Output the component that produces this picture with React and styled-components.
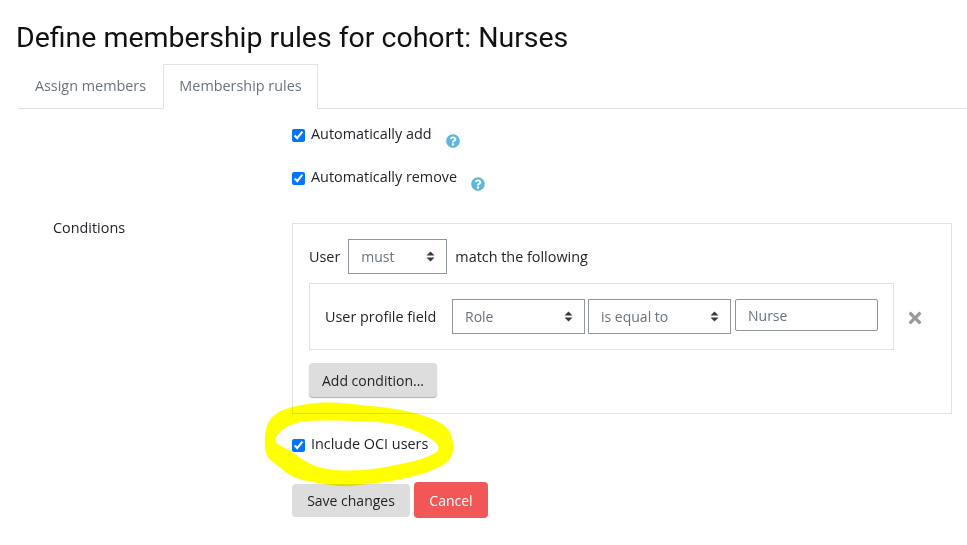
import React from 'react';
import styled, { createGlobalStyle } from 'styled-components';
import { FaQuestionCircle, FaTimes } from 'react-icons/fa';

const Global = createGlobalStyle`
  html, body { margin: 0; padding: 0; background: #fff; }
  body { font-family: "Open Sans", "Liberation Sans", sans-serif; font-size: 14.4px; color: #212529; }
`;
const Page = styled.div`
  position: relative;
  width: 967px;
  height: 545px;
  overflow: hidden;
  padding: 21px 0 0 16px;
  box-sizing: border-box;
`;
const Title = styled.h1`
  margin: 0;
  font-family: Roboto, "Liberation Sans", sans-serif;
  font-weight: 400;
  font-size: 28.48px;
  line-height: 33px;
  color: #111;
  height: 43px;
`;
const Tabs = styled.div`
  display: flex;
  margin-left: 2px;
  height: 45px;
  box-sizing: border-box;
  border-bottom: 1px solid #dee2e6;
`;
const Tab = styled.div`
  box-sizing: border-box;
  height: 45px;
  width: ${p => p.$w}px;
  padding-top: 11px;
  text-align: center;
  color: #6a737b;
  line-height: 19px;
  border: 1px solid ${p => (p.$active ? '#dee2e6' : 'transparent')};
  border-bottom-color: ${p => (p.$active ? '#fff' : 'transparent')};
`;
const Form = styled.div`
  display: grid;
  grid-template-columns: 239px 660px;
  margin-left: 37px;
`;
const Label = styled.div`
  padding-top: 109px;
  line-height: 19px;
`;
const Column = styled.div`
  display: flex;
  flex-direction: column;
  align-items: flex-start;
  padding-top: 16px;
`;
const CheckRow = styled.label`
  display: flex;
  align-items: flex-start;
  height: ${p => p.$h}px;
`;
const Check = styled.input`
  width: 13px;
  height: 13px;
  margin: 4px 6px 0 0;
  accent-color: #0075ff;
`;
const CheckText = styled.span`
  line-height: 19px;
  margin-top: -1px;
`;
const Help = styled.span`
  display: inline-flex;
  margin: 9px 0 0 14px;
  color: #5bb8d9;
  font-size: 14px;
`;
const Box = styled.div`
  box-sizing: border-box;
  width: 660px;
  height: 191px;
  border: 1px solid #dee2e6;
  padding: 15px 16px 0;
`;
const MatchRow = styled.div`
  display: flex;
  align-items: center;
  height: 35px;
`;
const RowText = styled.span`
  line-height: 19px;
  margin: ${p => p.$m || '0'};
`;
const SelectWrap = styled.span`
  position: relative;
  display: inline-flex;
  margin-right: ${p => p.$mr || 0}px;
  width: ${p => p.$w}px;
`;
const NativeSelect = styled.select`
  appearance: none;
  width: 100%;
  height: 35px;
  box-sizing: border-box;
  border: 1px solid #8f959e;
  border-radius: 0;
  background: #fff;
  color: #6a737b;
  padding: 0 12px;
  font-family: inherit;
  font-size: 14px;
  outline: none;
`;
const Arrows = styled.svg`
  position: absolute;
  right: 12px;
  top: 12px;
  pointer-events: none;
`;
const ConditionWrap = styled.div`
  display: flex;
  align-items: center;
  margin-top: 9px;
`;
const Condition = styled.div`
  box-sizing: border-box;
  width: 585px;
  height: 67px;
  border: 1px solid #dee2e6;
  padding: 15px 0 0 15px;
  display: flex;
  align-items: flex-start;
`;
const FieldLabel = styled.span`
  line-height: 35px;
  width: 127px;
  flex: none;
`;
const TextInput = styled.input`
  box-sizing: border-box;
  width: 143px;
  height: 32px;
  margin-left: 1px;
  border: 1px solid #8f959e;
  border-radius: 2px;
  padding: 0 12px;
  font-family: inherit;
  font-size: 14px;
  color: #6a737b;
  background: #fff;
  outline: none;
`;
const Remove = styled.span`
  display: inline-flex;
  margin: 2px 0 0 12px;
  color: #999;
  font-size: 18px;
`;
const GreyButton = styled.button`
  box-sizing: border-box;
  width: ${p => p.$w}px;
  height: ${p => p.$h}px;
  border: 0;
  border-radius: 4px;
  background: #ddd;
  color: #1d2125;
  font-family: inherit;
  font-size: 14px;
  padding: 0;
  box-shadow: ${p => (p.$raised ? '0 1px 1px #adb0b3' : 'none')};
`;
const AddButton = styled(GreyButton)`
  margin-top: 13px;
`;
const OciRow = styled(CheckRow)`
  margin-top: 21px;
`;
const Buttons = styled.div`
  display: flex;
  align-items: center;
  gap: 4px;
  height: 36px;
  margin-top: 19px;
`;
const CancelButton = styled.button`
  box-sizing: border-box;
  width: 74px;
  height: 36px;
  border: 0;
  border-radius: 4px;
  background: #f15757;
  color: #fff;
  font-family: inherit;
  font-size: 14px;
  padding: 0;
`;
const Scribble = styled.svg`
  position: absolute;
  left: 0;
  top: 0;
  mix-blend-mode: multiply;
  pointer-events: none;
`;

const outer = [[264.7,456],[264.7,431],[270,418],[283,409],[310,403],[335,402],[360,405],[393,408],[427,416],[447,426],[454,441],[452,461],[427,473],[393,481],[360,485],[343,487],[317,483],[293,478],[277,465]];
const inner = [[272.7,442],[280,431],[293,423],[313,420],[360,421],[393,423],[423,433],[443,448],[427,458],[393,466],[360,471],[327,470],[307,463],[290,450]];
const smooth = pts => {
  const mid = (a, b) => [(a[0] + b[0]) / 2, (a[1] + b[1]) / 2];
  const start = mid(pts[pts.length - 1], pts[0]);
  let d = `M${start[0]} ${start[1]}`;
  pts.forEach((p, i) => {
    const m = mid(p, pts[(i + 1) % pts.length]);
    d += `Q${p[0]} ${p[1]} ${m[0]} ${m[1]}`;
  });
  return d + 'Z';
};

const Select = ({ w, mr, value }) => (
  <SelectWrap $w={w} $mr={mr}>
    <NativeSelect defaultValue={value}><option>{value}</option></NativeSelect>
    <Arrows width="9" height="11" viewBox="0 0 9 11">
      <path d="M4.5 0.5L8.5 4.5H0.5Z M4.5 10.5L0.5 6.5H8.5Z" fill="#343a40" />
    </Arrows>
  </SelectWrap>
);

export default function App() {
  return (
    <Page>
      <Global />
      <Title>Define membership rules for cohort: Nurses</Title>
      <Tabs>
        <Tab $w={145}>Assign members</Tab>
        <Tab $w={155} $active>Membership rules</Tab>
      </Tabs>
      <Form>
        <Label>Conditions</Label>
        <Column>
          <CheckRow $h={43}>
            <Check type="checkbox" defaultChecked />
            <CheckText>Automatically add</CheckText>
            <Help><FaQuestionCircle /></Help>
          </CheckRow>
          <CheckRow $h={55}>
            <Check type="checkbox" defaultChecked />
            <CheckText>Automatically remove</CheckText>
            <Help><FaQuestionCircle /></Help>
          </CheckRow>
          <Box>
            <MatchRow>
              <RowText $m="0 8px 0 0">User</RowText>
              <Select w={99} mr={8} value="must" />
              <RowText>match the following</RowText>
            </MatchRow>
            <ConditionWrap>
              <Condition>
                <FieldLabel>User profile field</FieldLabel>
                <Select w={133} mr={3} value="Role" />
                <Select w={143} mr={3} value="is equal to" />
                <TextInput defaultValue="Nurse" />
              </Condition>
              <Remove><FaTimes /></Remove>
            </ConditionWrap>
            <AddButton $w={128} $h={34} $raised>Add condition...</AddButton>
          </Box>
          <OciRow $h={28}>
            <Check type="checkbox" defaultChecked />
            <CheckText>Include OCI users</CheckText>
          </OciRow>
          <Buttons>
            <GreyButton $w={118} $h={33}>Save changes</GreyButton>
            <CancelButton>Cancel</CancelButton>
          </Buttons>
        </Column>
      </Form>
      <Scribble width="967" height="545" viewBox="0 0 967 545">
        <path fillRule="evenodd" fill="#ffff00" d={smooth(outer) + smooth(inner)} />
      </Scribble>
    </Page>
  );
}
